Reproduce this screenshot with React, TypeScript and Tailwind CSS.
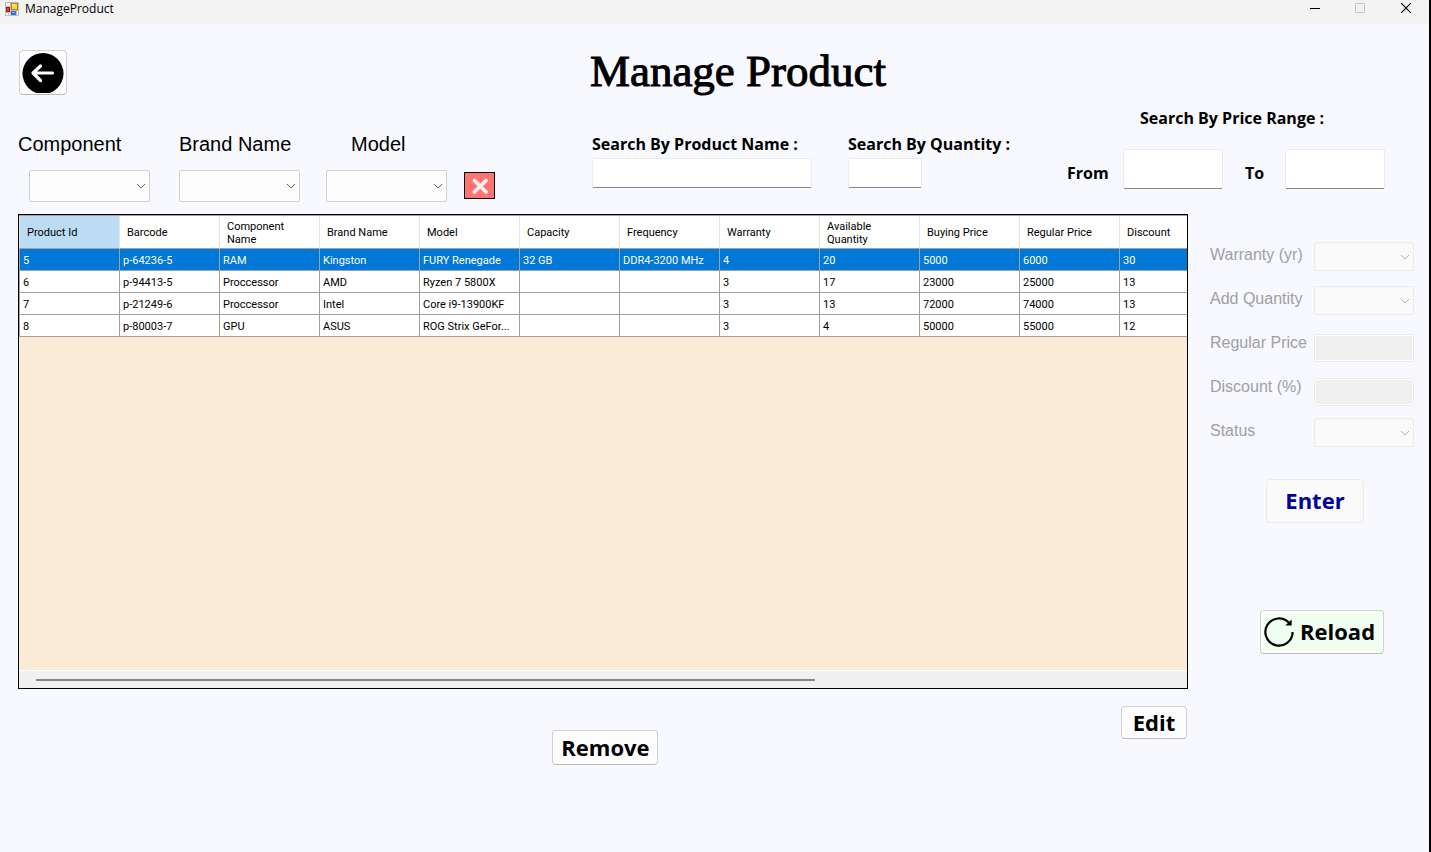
import { useState } from "react";
import type { ReactNode } from "react";

const COLUMNS = [
  "Product Id",
  "Barcode",
  "Component Name",
  "Brand Name",
  "Model",
  "Capacity",
  "Frequency",
  "Warranty",
  "Available Quantity",
  "Buying Price",
  "Regular Price",
  "Discount",
];

const ROWS = [
  ["5", "p-64236-5", "RAM", "Kingston", "FURY Renegade", "32 GB", "DDR4-3200 MHz", "4", "20", "5000", "6000", "30"],
  ["6", "p-94413-5", "Proccessor", "AMD", "Ryzen 7 5800X", "", "", "3", "17", "23000", "25000", "13"],
  ["7", "p-21249-6", "Proccessor", "Intel", "Core i9-13900KF", "", "", "3", "13", "72000", "74000", "13"],
  ["8", "p-80003-7", "GPU", "ASUS", "ROG Strix GeFor...", "", "", "3", "4", "50000", "55000", "12"],
];

function FormIcon() {
  return (
    <svg width="14" height="14" viewBox="0 0 14 14" shapeRendering="crispEdges" aria-hidden="true">
      <rect width="14" height="14" fill="#bdbdbd" />
      <rect x="1" y="1" width="4" height="3" fill="#fff" />
      <rect x="1" y="11" width="2" height="2" fill="#fff" />
      <rect x="4" y="11" width="1" height="2" fill="#fff" />
      <rect x="12" y="9" width="1" height="4" fill="#fff" />
      <rect x="6" y="1" width="7" height="7" fill="#b8860b" />
      <rect x="7" y="2" width="5" height="5" fill="#ffd23c" />
      <rect x="7" y="2" width="3" height="2" fill="#ffe98a" />
      <rect x="1" y="5" width="4" height="5" fill="#a31515" />
      <rect x="2" y="6" width="2" height="3" fill="#d94a3a" />
      <rect x="6" y="9" width="5" height="4" fill="#2f6fd6" />
      <rect x="7" y="10" width="3" height="1" fill="#7fb2f5" />
    </svg>
  );
}

function TitleBar() {
  return (
    <header className="flex h-6 items-start justify-between bg-[#f3f3f3] pl-[5px] font-['Open_Sans','Noto_Sans',sans-serif]">
      <div className="flex items-center gap-1.5">
        <FormIcon />
        <span className="text-xs leading-[18px] text-black">ManageProduct</span>
      </div>
      <div className="flex">
        <button type="button" aria-label="Minimize" className="flex h-4 w-[46px] items-center justify-center">
          <svg width="12" height="10" viewBox="0 0 12 10" shapeRendering="crispEdges">
            <path d="M2 5.5h10" stroke="#000" />
          </svg>
        </button>
        <button type="button" aria-label="Maximize" disabled className="flex h-4 w-[46px] items-center justify-center">
          <svg width="10" height="10" viewBox="0 0 10 10">
            <rect x="0.5" y="0.5" width="9" height="9" rx="0.5" fill="none" stroke="#c3c3c3" />
          </svg>
        </button>
        <button type="button" aria-label="Close" className="flex h-4 w-[46px] items-center justify-center">
          <svg width="10" height="10" viewBox="0 0 10 10">
            <path d="M0 0l10 10M10 0L0 10" stroke="#000" strokeWidth="1.1" />
          </svg>
        </button>
      </div>
    </header>
  );
}

function Select({ id, className, disabled }: { id: string; className: string; disabled?: boolean }) {
  return (
    <div className={`relative ${className}`}>
      <select
        id={id}
        disabled={disabled}
        className="h-full w-full appearance-none rounded-xs border border-[#d0d0d0] bg-[#fdfdfd] px-2 text-sm disabled:border-[#ebebeb] disabled:bg-[#fafafa] disabled:opacity-100"
      >
        <option value=""></option>
      </select>
      <svg
        className={`pointer-events-none absolute top-1/2 right-1 -translate-y-1/2 ${disabled ? "text-[#b5b5b5]" : "text-[#606060]"}`}
        width="10"
        height="6"
        viewBox="0 0 10 6"
        fill="none"
        stroke="currentColor"
        aria-hidden="true"
      >
        <path d="M1 1l4 4 4-4" />
      </svg>
    </div>
  );
}

const textBox =
  "rounded-xs border border-[#ebebeb] border-b-[#868686] bg-white px-2 text-sm text-black outline-none";
const searchLabel = "text-base leading-6 font-bold text-black font-['Open_Sans','Noto_Sans',sans-serif]";
const boldButton =
  "flex items-center justify-center rounded border border-[#d0d0d0] border-b-[#bababa] bg-[#fdfdfd] pb-0.5 text-[22px] leading-7 font-bold text-black font-['Open_Sans','Noto_Sans',sans-serif]";

function Filters() {
  return (
    <section aria-label="Filters" className="flex h-[108px] items-start pr-[29px]">
      <div className="flex items-end pt-[26px]">
        <div className="w-[161px]">
          <label htmlFor="component" className="block text-xl leading-6">Component</label>
          <Select id="component" className="mt-[14px] ml-[11px] h-8 w-[121px]" />
        </div>
        <div className="w-[147px]">
          <label htmlFor="brand" className="block text-xl leading-6">Brand Name</label>
          <Select id="brand" className="mt-[14px] h-8 w-[121px]" />
        </div>
        <div className="w-[138px]">
          <label htmlFor="model" className="block pl-[25px] text-xl leading-6">Model</label>
          <Select id="model" className="mt-[14px] h-8 w-[121px]" />
        </div>
        <button
          type="button"
          aria-label="Clear filters"
          className="mb-[3px] flex h-[27px] w-[31px] items-center justify-center border border-black bg-[#ff7373]"
        >
          <svg width="16" height="16" viewBox="0 0 16 16" aria-hidden="true">
            <path d="M2.500 2.500l11.500 11.500M14 2.500L2.500 14" stroke="#f3eef0" strokeWidth="3.800" strokeLinecap="round" />
          </svg>
        </button>
      </div>

      <div className="ml-[97px] flex gap-9 pt-[26px]">
        <div>
          <label htmlFor="search-name" className={`block ${searchLabel}`}>Search By Product Name :</label>
          <input id="search-name" type="text" className={`mt-0.5 block h-[30px] w-[220px] ${textBox}`} />
        </div>
        <div>
          <label htmlFor="search-quantity" className={`block ${searchLabel}`}>Search By Quantity :</label>
          <input id="search-quantity" type="text" className={`mt-0.5 block h-[30px] w-[74px] ${textBox}`} />
        </div>
      </div>

      <fieldset className="ml-auto flex flex-col">
        <legend className={`pl-[73px] ${searchLabel}`}>Search By Price Range :</legend>
        <div className="mt-[19px] flex items-start">
          <label htmlFor="price-from" className={`mt-3 w-14 ${searchLabel}`}>From</label>
          <input id="price-from" type="text" className={`h-10 w-[100px] ${textBox}`} />
          <label htmlFor="price-to" className={`mt-3 ml-[22px] w-10 ${searchLabel}`}>To</label>
          <input id="price-to" type="text" className={`h-10 w-[100px] ${textBox}`} />
        </div>
      </fieldset>
    </section>
  );
}

function ProductGrid({ selected, onSelect }: { selected: number; onSelect: (row: number) => void }) {
  return (
    <div className="flex min-h-[300px] flex-1 flex-col border border-black bg-[#faebd7]">
      <div className="flex-1 overflow-hidden border-t border-[#a0a0a0]">
        <table className="w-full min-w-[1201px] table-fixed border-separate border-spacing-0 font-[Roboto,'Liberation_Sans',sans-serif] text-[11px] leading-[13px] text-black">
          <thead>
            <tr className="h-[33px]">
              {COLUMNS.map((name, i) => (
                <th
                  key={name}
                  scope="col"
                  className={`border-r border-b border-r-[#e5e5e5] border-b-[#a0a0a0] px-[7px] pt-px pb-0 text-left font-normal first:w-[101px] first:border-l first:border-l-[#e5e5e5] ${
                    i === 0 ? "bg-[#bcdcf4]" : "bg-white"
                  }`}
                >
                  {name}
                </th>
              ))}
            </tr>
          </thead>
          <tbody>
            {ROWS.map((row, r) => (
              <tr
                key={row[0]}
                onClick={() => onSelect(r)}
                className={`h-[22px] ${r === selected ? "bg-[#0078d7] text-white" : "bg-white"}`}
              >
                {row.map((value, c) => (
                  <td
                    key={c}
                    className="border-r border-b border-[#a0a0a0] px-[3px] pt-px pb-0 whitespace-nowrap first:border-l"
                  >
                    {value}
                  </td>
                ))}
              </tr>
            ))}
          </tbody>
        </table>
      </div>
      <div className="flex h-[18px] items-center border-t border-white bg-[#f0f0f0]">
        <div className="ml-[17px] h-0.5 w-2/3 bg-[#858585]" />
      </div>
    </div>
  );
}

function EditRow({ label, id, children }: { label: string; id: string; children: ReactNode }) {
  return (
    <div className="flex h-11 items-start justify-between">
      <label htmlFor={id} className="leading-[25px] whitespace-nowrap text-[#a0a0a0]">{label}</label>
      {children}
    </div>
  );
}

function EditPanel() {
  const lockedBox =
    "mt-1 h-7 w-[100px] rounded-xs border border-[#ebebeb] bg-[#f0f0f0] px-2 text-sm shadow-[inset_0_0_0_1px_#fff]";
  return (
    <aside className="flex w-[204px] shrink-0 flex-col pt-7">
      <EditRow label="Warranty (yr)" id="edit-warranty">
        <Select id="edit-warranty" disabled className="h-[29px] w-[100px]" />
      </EditRow>
      <EditRow label="Add Quantity" id="edit-quantity">
        <Select id="edit-quantity" disabled className="h-[29px] w-[100px]" />
      </EditRow>
      <EditRow label="Regular Price" id="edit-price">
        <input id="edit-price" type="text" disabled className={lockedBox} />
      </EditRow>
      <EditRow label="Discount (%)" id="edit-discount">
        <input id="edit-discount" type="text" disabled className={lockedBox} />
      </EditRow>
      <EditRow label="Status" id="edit-status">
        <Select id="edit-status" disabled className="h-[29px] w-[100px]" />
      </EditRow>
      <button
        type="button"
        className="mt-[17px] mr-[50px] flex h-11 w-[98px] items-center justify-center self-end rounded border border-[#ebebeb] bg-[#fafafa] pb-0.5 font-['Open_Sans','Noto_Sans',sans-serif] text-[22px] leading-7 font-bold text-[#0000a0]"
      >
        Enter
      </button>
      <button
        type="button"
        className="mt-[87px] mr-[30px] flex h-11 w-[124px] items-center gap-1.5 self-end rounded border border-[#d0d0d0] border-b-[#bababa] bg-[#f0fff0] pl-[3px] font-['Open_Sans','Noto_Sans',sans-serif] text-[22px] leading-7 font-bold text-black shadow-[inset_0_0_0_2px_#fdfdfd]"
      >
        <svg width="30" height="30" viewBox="0 0 30 30" className="shrink-0" aria-hidden="true">
          <path d="M28.600 15A13.600 13.600 0 1 1 25 5.800" fill="none" stroke="#000" strokeWidth="2.200" />
          <path d="M27.600 2.600V8.600H21.400z" fill="#000" />
        </svg>
        <span className="pb-0.5">Reload</span>
      </button>
    </aside>
  );
}

export default function App() {
  const [selected, setSelected] = useState(0);
  return (
    <div className="flex min-h-screen flex-col border-r-2 border-black bg-[#f8f8ff] font-['Liberation_Sans',Arial,sans-serif] text-black">
      <TitleBar />
      <main className="flex flex-1 flex-col pr-[15px] pl-[18px]">
        <div className="grid h-[82px] grid-cols-[48px_1fr_48px] items-start pt-[26px]">
          <button
            type="button"
            aria-label="Back"
            className="ml-px flex h-[45px] w-12 items-center justify-center rounded border border-[#d0d0d0] border-b-[#bababa] bg-[#fdfdfd]"
          >
            <svg width="42" height="40" viewBox="0 0 42 40" aria-hidden="true">
              <circle cx="21" cy="20.500" r="20.500" fill="#000" />
              <path d="M30.500 20H12M18.500 13l-7.500 7 7.500 7.500" fill="none" stroke="#fff" strokeWidth="3.200" strokeLinejoin="round" strokeLinecap="round" />
            </svg>
          </button>
          <h1 className="pl-11 text-center font-['Liberation_Serif','Times_New_Roman',serif] text-[45px] leading-[43px] [-webkit-text-stroke:1px_black]">
            Manage Product
          </h1>
        </div>
        <Filters />
        <div className="flex flex-1 gap-[22px]">
          <div className="flex min-w-0 flex-1 flex-col">
            <ProductGrid selected={selected} onSelect={setSelected} />
            <div className="grid grid-cols-3 items-start pt-[17px] pr-px pb-[87px] pl-[6px]">
              <button type="button" className={`col-start-2 mt-6 h-[35px] w-[106px] justify-self-center ${boldButton}`}>
                Remove
              </button>
              <button type="button" className={`h-[33px] w-[66px] justify-self-end ${boldButton}`}>
                Edit
              </button>
            </div>
          </div>
          <EditPanel />
        </div>
      </main>
    </div>
  );
}
